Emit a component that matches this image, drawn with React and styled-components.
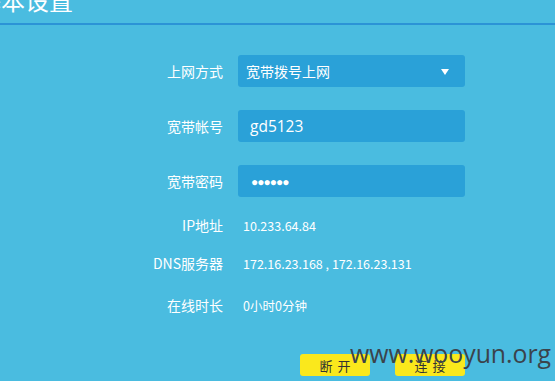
import React from "react";
import styled, { createGlobalStyle } from "styled-components";

const Global = createGlobalStyle`
  html, body { margin: 0; padding: 0; }
  body {
    background: #4abce0;
    width: 555px;
    height: 381px;
    overflow: hidden;
    font-family: "Noto Sans CJK SC", "Noto Sans", sans-serif;
    color: #ffffff;
  }
`;

const Page = styled.div`
  position: relative;
  width: 555px;
  height: 381px;
  overflow: hidden;
`;

const Header = styled.div`
  display: flex;
  height: 23px;
  border-bottom: 2px solid #2b93d6;
`;

const Title = styled.h1`
  margin: -12px 0 0 -23px;
  font-size: 24px;
  line-height: 24px;
  font-weight: 400;
  white-space: nowrap;
`;

const Form = styled.div`
  display: flex;
  flex-direction: column;
  padding-top: 30px;
`;

const Row = styled.div`
  display: grid;
  grid-template-columns: 223px 227px;
  column-gap: 15px;
  align-items: center;
  height: ${(p) => p.$h}px;
  margin-top: ${(p) => p.$mt || 0}px;
`;

const Label = styled.div`
  text-align: right;
  font-size: 14px;
  white-space: nowrap;
`;

const Field = styled.div`
  position: relative;
  display: flex;
  align-items: center;
  height: 32px;
  background: #2aa1d8;
  border-radius: 3px;
  padding-left: ${(p) => p.$pad}px;
  font-size: ${(p) => p.$size}px;
  font-family: ${(p) =>
    p.$latin ? `"Open Sans", "Noto Sans", sans-serif` : `"Noto Sans CJK SC", sans-serif`};
  letter-spacing: ${(p) => p.$ls || 0}px;
`;

const Arrow = styled.span`
  position: absolute;
  right: 16px;
  top: 14px;
  width: 0;
  height: 0;
  border-left: 4.5px solid transparent;
  border-right: 4.5px solid transparent;
  border-top: 6px solid #ffffff;
`;

const Value = styled.div`
  font-size: 12.5px;
  white-space: nowrap;
  margin-left: 5px;
`;

const Buttons = styled.div`
  display: flex;
  gap: 25px;
  margin: 39px 0 0 300px;
`;

const Button = styled.div`
  width: 70px;
  height: 22px;
  display: flex;
  align-items: center;
  justify-content: center;
  background: #fae81c;
  border-radius: 3px;
  color: #333333;
  font-size: 13px;
  letter-spacing: 5px;
  text-indent: 5px;
`;

const Watermark = styled.div`
  position: absolute;
  left: 350px;
  top: 340px;
  font-family: "Open Sans", sans-serif;
  font-size: 24.8px;
  line-height: 27px;
  color: #3b434b;
  white-space: nowrap;
`;

export default function App() {
  return (
    <Page>
      <Global />
      <Header>
        <Title>基本设置</Title>
      </Header>
      <Form>
        <Row $h={32}>
          <Label>上网方式</Label>
          <Field $pad={8} $size={14}>
            宽带拨号上网
            <Arrow />
          </Field>
        </Row>
        <Row $h={32} $mt={23}>
          <Label>宽带帐号</Label>
          <Field $pad={12} $size={15.5} $latin>
            gd5123
          </Field>
        </Row>
        <Row $h={32} $mt={23}>
          <Label>宽带密码</Label>
          <Field $pad={13} $size={12} $latin $ls={-1}>
            ●●●●●●
          </Field>
        </Row>
        <Row $h={20} $mt={18}>
          <Label>IP地址</Label>
          <Value>10.233.64.84</Value>
        </Row>
        <Row $h={20} $mt={18}>
          <Label>DNS服务器</Label>
          <Value>172.16.23.168 , 172.16.23.131</Value>
        </Row>
        <Row $h={20} $mt={22}>
          <Label>在线时长</Label>
          <Value>0小时0分钟</Value>
        </Row>
        <Buttons>
          <Button>断开</Button>
          <Button>连接</Button>
        </Buttons>
      </Form>
      <Watermark>www.wooyun.org</Watermark>
    </Page>
  );
}
